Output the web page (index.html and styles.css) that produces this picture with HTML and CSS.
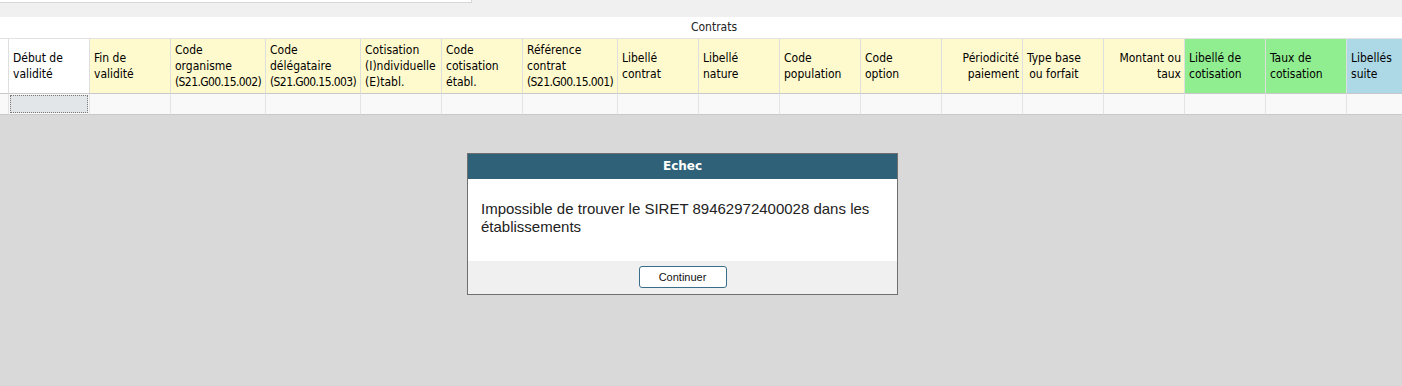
FILE: index.html
```html
<!DOCTYPE html>
<html lang="fr">
<head>
    <meta charset="UTF-8">
    <title>Contrats</title>
    <link rel="stylesheet" href="styles.css">
</head>
<body>
    <div class="topbar">
        <div class="topbox"></div>
    </div>

    <div class="sheet">
        <div class="sheet-title">Contrats</div>

        <div class="grid">
            <div class="hd white"></div>
            <div class="hd white">Début de<br>validité</div>
            <div class="hd yellow">Fin de<br>validité</div>
            <div class="hd yellow">Code<br>organisme<br><span class="ref">(S21.G00.15.002)</span></div>
            <div class="hd yellow">Code<br>délégataire<br><span class="ref">(S21.G00.15.003)</span></div>
            <div class="hd yellow">Cotisation<br>(I)ndividuelle<br>(E)tabl.</div>
            <div class="hd yellow">Code<br>cotisation<br>établ.</div>
            <div class="hd yellow">Référence<br>contrat<br><span class="ref">(S21.G00.15.001)</span></div>
            <div class="hd yellow">Libellé<br>contrat</div>
            <div class="hd yellow">Libellé<br>nature</div>
            <div class="hd yellow">Code<br>population</div>
            <div class="hd yellow">Code<br>option</div>
            <div class="hd yellow right">Périodicité<br>paiement</div>
            <div class="hd yellow"><span class="centered">Type base<br>ou forfait</span></div>
            <div class="hd yellow right">Montant ou<br>taux</div>
            <div class="hd green">Libellé de<br>cotisation</div>
            <div class="hd green">Taux de<br>cotisation</div>
            <div class="hd blue">Libellés<br>suite</div>

            <div class="cell"></div>
            <div class="cell current"><span class="focus"></span></div>
            <div class="cell"></div>
            <div class="cell"></div>
            <div class="cell"></div>
            <div class="cell"></div>
            <div class="cell"></div>
            <div class="cell"></div>
            <div class="cell"></div>
            <div class="cell"></div>
            <div class="cell"></div>
            <div class="cell"></div>
            <div class="cell"></div>
            <div class="cell"></div>
            <div class="cell"></div>
            <div class="cell"></div>
            <div class="cell"></div>
            <div class="cell"></div>
        </div>
    </div>

    <div class="dialog">
        <div class="dialog-head">Echec</div>
        <div class="dialog-body">
            Impossible de trouver le SIRET 89462972400028 dans les établissements
        </div>
        <div class="dialog-foot">
            <button class="btn">Continuer</button>
        </div>
    </div>
</body>
</html>
```

FILE: styles.css
```css
body {
    margin: 0;
    background: #d9d9d9;
    height: 386px;
    overflow: hidden;
    position: relative;
    font-family: "DejaVu Sans Condensed", "Open Sans", sans-serif;
    font-size: 12px;
    color: #000;
}
.topbar {
    height: 17px;
    background: #f0f0f0;
}
.topbox {
    width: 471px;
    height: 2px;
    background: #fff;
    border-right: 1px solid #d6d6d6;
    border-bottom: 1px solid #d6d6d6;
}
.sheet {
    width: 1428px;
    background: #fff;
}
.sheet-title {
    height: 21px;
    line-height: 20px;
    text-align: center;
    color: #222;
}
.grid {
    display: grid;
    grid-template-columns: 9px 81px 81px 95px 95px 81px 81px 95px repeat(10, 81px);
    border-top: 1px solid #e2e2e2;
}
.hd {
    height: 54px;
    padding: 0 3px 0 4px;
    display: flex;
    flex-direction: column;
    justify-content: center;
    line-height: 16px;
    border-right: 1px solid #dedede;
    border-bottom: 1px solid #c8c8c8;
    white-space: nowrap;
    overflow: hidden;
}
.hd.right {
    text-align: right;
}
.ref {
    letter-spacing: -0.6px;
}
.centered {
    align-self: flex-start;
    text-align: center;
}
.white { background: #fff; }
.yellow { background: #fffacd; }
.green { background: #90ee90; }
.blue { background: #add8e6; }
.cell {
    height: 21px;
    box-sizing: border-box;
    background: #f9f9f9;
    border-right: 1px solid #e4e4e4;
    border-bottom: 1px solid #c8c8c8;
}
.cell.current {
    padding: 1px;
}
.focus {
    display: block;
    height: 100%;
    box-sizing: border-box;
    background: #e2e6e9;
    border: 1px dotted #777;
}
.dialog {
    position: absolute;
    left: 467px;
    top: 153px;
    width: 429px;
    border: 1px solid #6f6f6f;
    background: #fff;
}
.dialog-head {
    height: 25px;
    line-height: 24px;
    background: #2f6279;
    color: #fff;
    font-family: "DejaVu Sans", sans-serif;
    font-weight: bold;
    font-size: 12px;
    text-align: center;
}
.dialog-body {
    height: 82px;
    padding: 21px 20px 0 13px;
    box-sizing: border-box;
    font-family: "Liberation Sans", Arial, sans-serif;
    font-size: 15px;
    line-height: 18px;
    color: #222;
}
.dialog-foot {
    height: 33px;
    background: #f0f0f0;
    display: flex;
    justify-content: center;
    padding-top: 5px;
    box-sizing: border-box;
}
.btn {
    width: 88px;
    height: 22px;
    background: #fff;
    border: 1px solid #3a6d8a;
    border-radius: 3px;
    font-family: "Liberation Sans", Arial, sans-serif;
    font-size: 11px;
    color: #111;
    padding: 0;
}
```
